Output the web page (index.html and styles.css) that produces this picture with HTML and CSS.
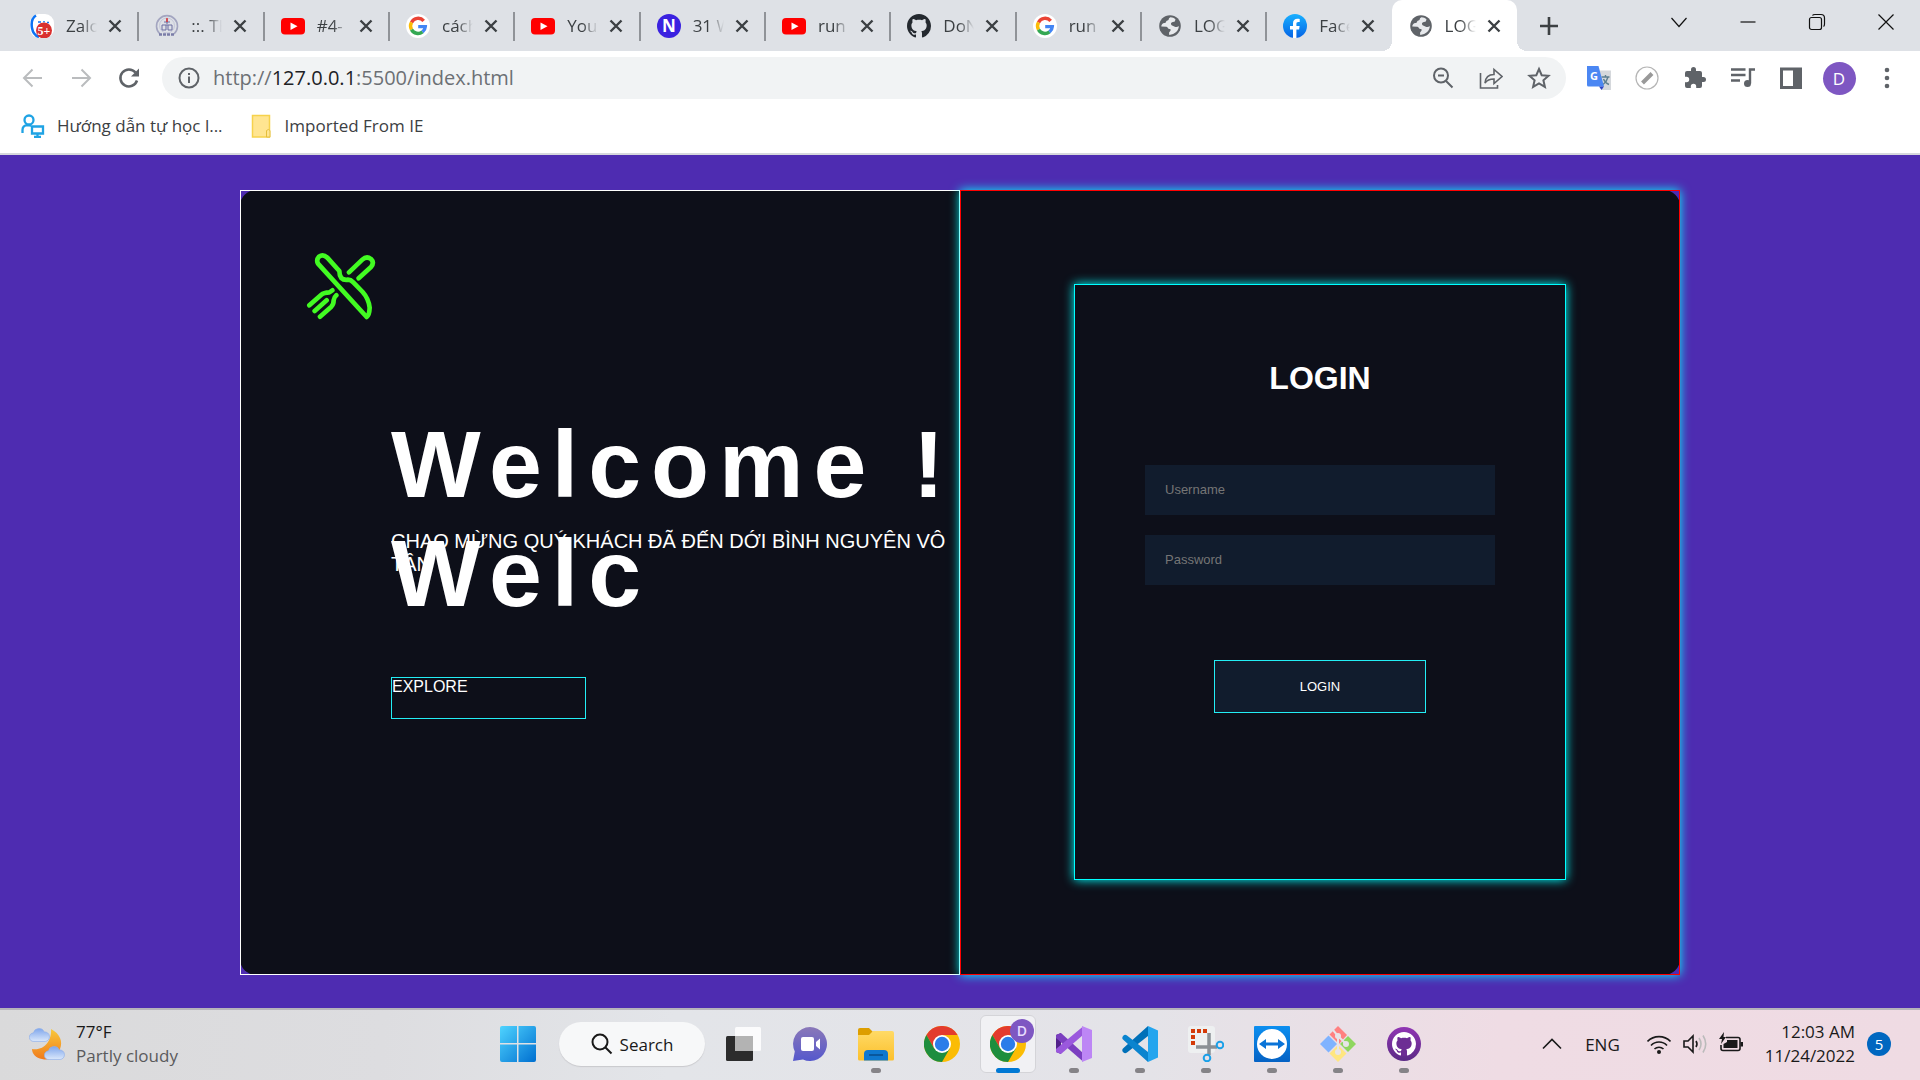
FILE: index.html
```html
<!DOCTYPE html>
<html lang="vi">
<head>
<meta charset="utf-8">
<title>LOGIN</title>
<link rel="stylesheet" href="styles.css">
</head>
<body>
<svg class="sprite" aria-hidden="true">
  <defs>
    <linearGradient id="gWin" x1="0" y1="0" x2="1" y2="1"><stop offset="0" stop-color="#4fd4ff"/><stop offset="1" stop-color="#006fd0"/></linearGradient>
    <linearGradient id="gMoon" x1="0" y1="0" x2="0" y2="1"><stop offset="0" stop-color="#f8c93c"/><stop offset="1" stop-color="#f07a1c"/></linearGradient>
    <linearGradient id="gCloud" x1="0" y1="0" x2="0" y2="1"><stop offset="0" stop-color="#7fa6ec"/><stop offset="1" stop-color="#dbe8fb"/></linearGradient>
    <linearGradient id="gChat" x1="0" y1="0" x2="0" y2="1"><stop offset="0" stop-color="#8a78b8"/><stop offset="1" stop-color="#5558cc"/></linearGradient>
    <linearGradient id="gFolder" x1="0" y1="0" x2="0" y2="1"><stop offset="0" stop-color="#ffda66"/><stop offset="1" stop-color="#fcc02c"/></linearGradient>
    <linearGradient id="gFb" x1="0" y1="0" x2="0" y2="1"><stop offset="0" stop-color="#19b0ff"/><stop offset="1" stop-color="#0563e5"/></linearGradient>
    <linearGradient id="gGh" x1="0" y1="0" x2="0" y2="1"><stop offset="0" stop-color="#9035b3"/><stop offset="1" stop-color="#5b2a86"/></linearGradient>
    <linearGradient id="gTv" x1="0" y1="0" x2="0" y2="1"><stop offset="0" stop-color="#0c8ff0"/><stop offset="1" stop-color="#0562c4"/></linearGradient>
  </defs>
  <symbol id="i-x" viewBox="0 0 24 24"><path d="M6.500 6.500l11 11m0-11l-11 11" stroke="#3c4043" stroke-width="2.400" fill="none"/></symbol>
  <symbol id="i-youtube" viewBox="0 0 24 24"><rect y="4" width="24" height="16.500" rx="4" fill="#f00"/><path d="M9.500 8.500l7 3.700-7 3.700z" fill="#fff"/></symbol>
  <symbol id="i-google" viewBox="0 0 24 24"><circle cx="12" cy="12" r="12" fill="#fff"/><g fill="none" stroke-width="3.400"><path d="M17.700 6.800A7.400 7.400 0 0 0 5.500 8.400" stroke="#ea4335"/><path d="M5.500 8.400a7.400 7.400 0 0 0 0 7.200" stroke="#fbbc05"/><path d="M5.500 15.600a7.400 7.400 0 0 0 11 2.300" stroke="#34a853"/><path d="M16.500 17.900a7.400 7.400 0 0 0 2.800-5.300H12.200" stroke="#4285f4"/></g></symbol>
  <symbol id="i-globe" viewBox="0 0 24 24"><circle cx="12" cy="12" r="10.800" fill="#5f6368"/><path d="M12.500 3.300c-2.500 1-1 2.700-3 3.200s-1 2.500-3 2.500-3.300 2-3.200 3.500l5.200.3c1.500.4 1.200 2.200 3 2.300s1.200 2 .2 2.600-.5 2-.5 3.200C17 20.500 20.800 16.500 20.800 12c-1 1-2.700 1.500-4 .7-1.200-1-3.300-.7-3.800-2.500s1.200-2.300 3.200-2.500c1-.1 1-2 1.300-2.500-1.200-1-3.400-2-5-1.900z" fill="#e8eaed"/></symbol>
  <symbol id="i-github" viewBox="0 0 16 16"><path fill-rule="evenodd" d="M8 0C3.580 0 0 3.580 0 8c0 3.540 2.290 6.530 5.470 7.590.4.070.55-.17.55-.38 0-.19-.01-.82-.01-1.490-2.010.37-2.530-.49-2.690-.94-.09-.23-.48-.94-.82-1.130-.28-.15-.68-.52-.01-.53.63-.01 1.080.58 1.230.82.72 1.210 1.870.87 2.330.66.07-.52.28-.87.51-1.070-1.780-.2-3.640-.89-3.640-3.950 0-.87.31-1.590.82-2.150-.08-.2-.36-1.020.08-2.120 0 0 .67-.21 2.200.82.64-.18 1.320-.27 2-.27s1.360.09 2 .27c1.530-1.040 2.200-.82 2.200-.82.44 1.100.16 1.920.08 2.120.51.56.82 1.270.82 2.150 0 3.070-1.870 3.750-3.650 3.950.29.25.54.73.54 1.480 0 1.070-.01 1.930-.01 2.200 0 .21.15.46.55.38A8.010 8.010 0 0 0 16 8c0-4.420-3.580-8-8-8z"/></symbol>
  <symbol id="i-chrome" viewBox="0 0 36 36"><circle cx="18" cy="18" r="18" fill="#fbbc04"/><path d="M18 9h15.600A18 18 0 0 0 2.400 9l7.800 13.500z" fill="#e33b2e"/><path d="M2.400 9a18 18 0 0 0 15.600 27l7.800-13.500-15.600 0z" fill="#1e8e3e"/><circle cx="18" cy="18" r="9" fill="#fff"/><circle cx="18" cy="18" r="7.200" fill="#2b7de9"/></symbol>
  <symbol id="i-cloud" viewBox="0 0 22 17"><path d="M5 16.500a4.600 4.600 0 0 1-.4-9.200A6 6 0 0 1 16 6.300a5 5 0 0 1 1 10.200z" fill="url(#gCloud)" stroke="#8fb0ea" stroke-width=".7"/></symbol>
</svg>

<header class="browser">
  <div class="tabstrip">
    <nav class="tabs" aria-label="Tabs">
      <div class="tab"><svg class="fav" viewBox="0 0 24 24"><rect width="24" height="24" rx="9" fill="#fff"/><path d="M6 1.500C2 4 1 8 2 14s4 8 7 9" fill="none" stroke="#0b73f5" stroke-width="2.500"/><path d="M8 8h3M14 7v1.500M17 8.500h2" stroke="#0b73f5" stroke-width="1.500"/><circle cx="14" cy="16.500" r="8" fill="#d93030"/><text x="14" y="20.500" text-anchor="middle" class="t-badge">5+</text></svg><span class="title">Zalo</span><button class="close" aria-label="Close"><svg><use href="#i-x"/></svg></button></div>
      <div class="tab"><svg class="fav" viewBox="0 0 24 24" fill="none" stroke="#a3a5c0"><path d="M5 20A10.500 10.500 0 1 1 19 20" stroke-width="1.600"/><circle cx="12" cy="11.500" r="7.500" stroke="#c4c6d8"/><path d="M12 5v7M9 8h6M7 11h4v5H7zM13 11h4v5h-4z" stroke="#6b6da0"/><path d="M12 4v4" stroke="#d33" stroke-width="1.500"/><path d="M4 20.500h16" stroke="#7a7ca8" stroke-width="2.500" stroke-dasharray="3 1"/></svg><span class="title">::. TH</span><button class="close" aria-label="Close"><svg><use href="#i-x"/></svg></button></div>
      <div class="tab"><svg class="fav"><use href="#i-youtube"/></svg><span class="title">#4-</span><button class="close" aria-label="Close"><svg><use href="#i-x"/></svg></button></div>
      <div class="tab"><svg class="fav"><use href="#i-google"/></svg><span class="title">cách</span><button class="close" aria-label="Close"><svg><use href="#i-x"/></svg></button></div>
      <div class="tab"><svg class="fav"><use href="#i-youtube"/></svg><span class="title">YouT</span><button class="close" aria-label="Close"><svg><use href="#i-x"/></svg></button></div>
      <div class="tab"><svg class="fav" viewBox="0 0 24 24"><circle cx="12" cy="12" r="12" fill="#3b22e0"/><text x="12" y="18" text-anchor="middle" class="t-n">N</text></svg><span class="title">31 W</span><button class="close" aria-label="Close"><svg><use href="#i-x"/></svg></button></div>
      <div class="tab"><svg class="fav"><use href="#i-youtube"/></svg><span class="title">run</span><button class="close" aria-label="Close"><svg><use href="#i-x"/></svg></button></div>
      <div class="tab"><svg class="fav" fill="#24292f"><use href="#i-github"/></svg><span class="title">DoN</span><button class="close" aria-label="Close"><svg><use href="#i-x"/></svg></button></div>
      <div class="tab"><svg class="fav"><use href="#i-google"/></svg><span class="title">run</span><button class="close" aria-label="Close"><svg><use href="#i-x"/></svg></button></div>
      <div class="tab"><svg class="fav"><use href="#i-globe"/></svg><span class="title">LOG</span><button class="close" aria-label="Close"><svg><use href="#i-x"/></svg></button></div>
      <div class="tab last"><svg class="fav" viewBox="0 0 24 24"><circle cx="12" cy="12" r="12" fill="url(#gFb)"/><path d="M10 24v-8.500H7V12h3V9.300C10 6.300 11.700 4.700 14.400 4.700c1.200 0 2.300.2 2.300.2v3h-1.400c-1.500 0-1.900.9-1.900 1.800V12h3.200l-.5 3.500h-2.700V24z" fill="#fff"/></svg><span class="title">Face</span><button class="close" aria-label="Close"><svg><use href="#i-x"/></svg></button></div>
      <div class="tab active"><svg class="fav"><use href="#i-globe"/></svg><span class="title">LOG</span><button class="close" aria-label="Close"><svg><use href="#i-x"/></svg></button></div>
    </nav>
    <button class="newtab" aria-label="New tab"><svg viewBox="0 0 24 24" width="24" height="24"><path d="M12 3v18M3 12h18" stroke="#3c4043" stroke-width="2.600"/></svg></button>
    <div class="winctl">
      <button aria-label="Search tabs"><svg viewBox="0 0 24 24"><path d="M4.500 8l7.500 8.500L19.500 8"/></svg></button>
      <button aria-label="Minimize"><svg viewBox="0 0 24 24"><path d="M4.500 12h15"/></svg></button>
      <button aria-label="Restore"><svg viewBox="0 0 24 24"><rect x="4.500" y="7.500" width="12" height="12" rx="2"/><path d="M7.500 5.500Q8 4.500 10 4.500h6q3.500 0 3.500 3.500v6q0 2-1 2.500"/></svg></button>
      <button aria-label="Close window"><svg viewBox="0 0 24 24"><path d="M4.500 4.500l15 15m0-15l-15 15"/></svg></button>
    </div>
  </div>

  <div class="toolbar">
    <button aria-label="Back" class="dim"><svg viewBox="0 0 24 24"><path d="M21 12H3.500M11.500 3.500L3 12l8.500 8.500"/></svg></button>
    <button aria-label="Forward" class="dim"><svg viewBox="0 0 24 24"><path d="M3 12h17.500M12.500 3.500L21 12l-8.500 8.500"/></svg></button>
    <button aria-label="Reload"><svg viewBox="0 0 24 24"><path d="M20 14.500a8.500 8.500 0 1 1-1.500-8" stroke-width="2.500"/><path d="M22 2.500v8h-8z" fill="#5f6368" stroke="none"/></svg></button>
    <div class="omnibox">
      <svg class="info" viewBox="0 0 24 24"><circle cx="12" cy="12" r="9.500"/><path d="M12 10.500v6.500M12 7v2"/></svg>
      <div class="url" role="textbox" aria-label="Address" contenteditable="true" spellcheck="false">http://<b>127.0.0.1</b>:5500/index.html</div>
      <button aria-label="Zoom"><svg viewBox="0 0 24 24"><circle cx="10" cy="9.500" r="7"/><path d="M15 15l6.500 6.500M7 9.500h6" /></svg></button>
      <button aria-label="Share"><svg viewBox="0 0 24 24"><g stroke-width="1.600"><path d="M1.500 7v15h17v-3"/><path d="M6 17c.5-6 4-8.500 9-8.500V3.500l8 7-8 7V13c-4 0-7 1-9 4z"/></g></svg></button>
      <button aria-label="Bookmark"><svg viewBox="0 0 24 24"><path d="M12 3l2.700 6.200 6.800.6-5.100 4.500 1.500 6.600-5.900-3.500-5.900 3.500 1.500-6.600-5.100-4.500 6.800-.6z"/></svg></button>
    </div>
    <div class="ext">
      <button aria-label="Translate"><svg class="solid" viewBox="0 0 24 24"><path d="M11 4.500h13V24H15z" fill="#d5d8dc"/><path d="M14.500 11h8M18.500 9v2M21 11c-1 4-3 6-5 7.500M16.500 13c1 2.500 3 4.500 5.500 5.500" stroke="#5d7f90" stroke-width="1.400" fill="none"/><path d="M0 0h11.500L17 20.500H1.500Q0 20.500 0 19z" fill="#4b87f3"/><path d="M12 20.500h5L14.500 24z" fill="#2f45c5"/><text x="7" y="14" text-anchor="middle" class="t-g">G</text></svg></button>
      <button aria-label="Editor"><svg viewBox="0 0 24 24"><circle cx="12" cy="12" r="11" stroke="#b5b5b5" stroke-width="1.200"/><path d="M7.500 17L17 7.500" stroke="#999" stroke-width="4"/></svg></button>
      <button aria-label="Extensions"><svg class="solid" viewBox="0 0 24 24"><path fill="#5f6368" d="M20.500 11H19V7a2 2 0 0 0-2-2h-4V3.500a2.500 2.500 0 0 0-5 0V5H4a2 2 0 0 0-2 2v3.800h1.500a2.700 2.700 0 0 1 0 5.400H2V20a2 2 0 0 0 2 2h3.800v-1.500a2.700 2.700 0 0 1 5.400 0V22H17a2 2 0 0 0 2-2v-4h1.500a2.500 2.500 0 0 0 0-5z"/></svg></button>
      <button aria-label="Media"><svg viewBox="0 0 24 24"><path d="M0 3.500h14.500M0 9h14.500M0 14.500h9M19 17.500V3.500h5" stroke-width="2.400"/><circle cx="16.500" cy="17.500" r="3.500" fill="#5f6368" stroke="none"/></svg></button>
      <button aria-label="Side panel"><svg class="solid" viewBox="0 0 24 24"><path fill="#5f6368" fill-rule="evenodd" d="M1 1.500h22v21.500H1zM4 4.500V20h10V4.500z"/></svg></button>
      <button aria-label="Profile"><span class="avatar">D</span></button>
      <button aria-label="Menu"><svg class="solid" viewBox="0 0 24 24"><g fill="#5f6368"><circle cx="12" cy="4" r="2.300"/><circle cx="12" cy="12" r="2.300"/><circle cx="12" cy="20" r="2.300"/></g></svg></button>
    </div>
  </div>

  <nav class="bookmarks" aria-label="Bookmarks">
    <a href="#"><svg viewBox="0 0 24 24" fill="none" stroke="#1fa3e4" stroke-width="2.300"><circle cx="8" cy="6" r="4.500"/><path d="M1.500 19v-3q0-4.500 5-4.800l3.500.5M11 12.500h11v7H11zM16.500 20v3M13 23h7"/></svg>Hướng dẫn tự học l...</a>
    <a href="#"><svg viewBox="0 0 24 24"><path d="M3.500 1.500h17V23h-17z" fill="#ffe591" stroke="#f6d24c" stroke-width="1.500"/><path d="M17.500 23v-6.500q2-2 3.500 0V23z" fill="#ffe591" stroke="#e4be3c"/></svg>Imported From IE</a>
  </nav>
</header>

<main class="page">
  <div class="card">
    <section class="welcome">
      <svg class="logo" viewBox="258 246 210 204" aria-hidden="true"><path d="M294 281L440 441Q448 436 449 413Q446 386 428 366L400 337Q392 329 384 329Q371 331 364 324Q358 316 358 303L322 263Q309 251 297 260Q288 270 294 281zM387 307L427 269Q440 257 453 267Q464 278 453 291L416 325M268 406L304 374Q311 368 328 367L337 361M284 423L320 391M300 440L334 410Q341 403 341 391Q342 382 349 376"/></svg>
      <div class="intro">
        <h1>Welcome !<br>Welc</h1>
        <p>CHAO MỪNG QUÝ KHÁCH ĐÃ ĐẾN DỚI BÌNH NGUYÊN VÔ TÂN</p>
      </div>
      <a class="explore" href="#">EXPLORE</a>
    </section>
    <section class="side">
      <form class="login">
        <h2>LOGIN</h2>
        <input type="text" placeholder="Username" aria-label="Username">
        <input type="password" placeholder="Password" aria-label="Password">
        <button type="button">LOGIN</button>
      </form>
    </section>
  </div>
</main>

<footer class="taskbar">
  <button class="weather">
    <svg viewBox="0 0 36 34" width="36" height="34"><path d="M22 2c9 5 12 12 9 20-3 8-10 12-18 10C7 31 3 27 3 22c12 2 20-8 19-20z" fill="url(#gMoon)"/><use href="#i-cloud" x="0" y="-1" width="21" height="16"/><use href="#i-cloud" x="15" y="17" width="21" height="16"/></svg>
    <span class="lines"><span>77°F</span><span class="muted">Partly cloudy</span></span>
  </button>
  <nav class="apps" aria-label="Apps">
    <button class="app" aria-label="Start"><svg viewBox="0 0 36 36"><path d="M2 0h15v17H0V2q0-2 2-2zM18.500 0H34q2 0 2 2v15H18.500zM0 18.500h17V36H2q-2 0-2-2zM18.500 18.500H36V34q0 2-2 2H18.500z" fill="url(#gWin)"/></svg></button>
    <button class="search"><svg viewBox="0 0 22 22" width="22" height="22"><circle cx="9" cy="9" r="7.500"/><path d="M14.500 14.500l6 6"/></svg>Search</button>
    <button class="app" aria-label="Task view"><svg viewBox="0 0 36 36"><rect x="0" y="10" width="27" height="25" rx="1.500" fill="#2c2c2c"/><rect x="9" y="1" width="26" height="24" rx="1.500" fill="#fff" opacity=".85"/><path d="M9 10h18v15H9z" fill="#b3b3b3"/></svg></button>
    <button class="app" aria-label="Chat"><svg viewBox="0 0 36 36"><path d="M18 1a17 17 0 1 1-7 32.500L1 35l1.800-9.500A17 17 0 0 1 18 1z" fill="url(#gChat)"/><rect x="9" y="11" width="13" height="14" rx="2" fill="#fff"/><path d="M24 16l4-3.500v11L24 20z" fill="#fff"/></svg></button>
    <button class="app run" aria-label="File Explorer"><svg viewBox="0 0 36 36"><path d="M0 4q0-2 2-2h9l4 4v6H0z" fill="#dd9e00"/><path d="M0 9h11l4-4h19q2 0 2 2v26q0 1.500-1.500 1.500h-33Q0 34.500 0 33z" fill="url(#gFolder)"/><path d="M6 34.500V28q0-4 4-4h16q4 0 4 4v6.500z" fill="#0f78cf"/><path d="M11 29h14" stroke="#084c8c" stroke-width="1.500"/></svg></button>
    <button class="app" aria-label="Chrome"><svg><use href="#i-chrome"/></svg></button>
    <button class="app run current" aria-label="Chrome, profile D"><span class="tile"><svg><use href="#i-chrome"/></svg><span class="pbadge">D</span></span></button>
    <button class="app run" aria-label="Visual Studio"><svg viewBox="0 0 36 36"><path d="M0 9l5-2v21l-5-2z" fill="#52218a"/><path d="M5 7L27 27v8.500L0 12V9z" fill="#7b3fc0"/><path d="M5 28L27 9V.5L0 23v3z" fill="#9a58dd"/><path d="M26 0l10 4v28l-10 4z" fill="#bd86f5"/></svg></button>
    <button class="app run" aria-label="Visual Studio Code"><svg viewBox="0 0 36 36"><path d="M1.500 26.500Q-1 24 1.500 22L26 0v10L5 26.500q-2 1.500-3.500 0z" fill="#0070b8"/><path d="M1.500 9.500Q-1 12 1.500 14L26 36V26L5 9.500q-2-1.500-3.500 0z" fill="#0a84cf"/><path d="M26 0l10 4.500v27L26 36z" fill="#24a5ee"/></svg></button>
    <button class="app run" aria-label="Snipping Tool"><svg viewBox="0 0 36 36"><rect width="27" height="27" rx="3" fill="#eef0f1"/><path d="M3 5h16M5 9v10" stroke="#d43a08" stroke-width="4" stroke-dasharray="4 2" fill="none"/><path d="M21 7v22M8 21h21" stroke="#8b9095" stroke-width="3.500"/><g fill="none" stroke="#1ba0e8" stroke-width="2"><circle cx="32" cy="19" r="3.300"/><circle cx="19" cy="32" r="3.300"/></g></svg></button>
    <button class="app run" aria-label="TeamViewer"><svg viewBox="0 0 36 36"><rect width="36" height="36" rx="1" fill="url(#gTv)"/><circle cx="18" cy="18" r="15" fill="#fff"/><path d="M5 18l7-5v3.500h12V13l7 5-7 5v-3.500H12V23z" fill="#0a74d8"/></svg></button>
    <button class="app run" aria-label="Git"><svg viewBox="0 0 36 36"><path d="M18 0l9 9-8 9L9.500 8.500z" fill="#ff8080"/><path d="M8.500 9.500L17 18l-8.500 8.500L0 18z" fill="#80b3ff"/><path d="M28 10l8 8-8 8-8-8z" fill="#8fd65f"/><path d="M18 19l8.500 8.500L18 36l-8.500-8.500z" fill="#ffe680"/><path d="M13 4l5 6v15M18 10l8 8" stroke="#e8e4e8" stroke-width="2" fill="none"/><g fill="#e8e4e8"><circle cx="18" cy="10" r="3"/><circle cx="26" cy="18" r="3"/><circle cx="18" cy="26" r="3"/></g></svg></button>
    <button class="app run" aria-label="GitHub Desktop"><svg viewBox="0 0 36 36"><circle cx="18" cy="18" r="17" fill="url(#gGh)"/><circle cx="18" cy="18" r="12" fill="#6d2d94"/><use href="#i-github" x="6" y="6" width="24" height="24" fill="#fff"/></svg></button>
  </nav>
  <div class="tray">
    <button class="chev" aria-label="Hidden icons"><svg viewBox="0 0 24 24"><path d="M3 16.500l9-9 9 9"/></svg></button>
    <span class="lang">ENG</span>
    <button class="status" aria-label="Network, sound, battery">
      <svg viewBox="0 0 24 24"><path d="M.5 9.500a16 16 0 0 1 23 0M4 13.500a11 11 0 0 1 16 0M7.500 17a6.500 6.500 0 0 1 9 0"/><circle cx="12" cy="20" r="2" fill="#191919" stroke="none"/></svg>
      <svg viewBox="0 0 24 24"><path d="M1 9h4l5-5v16l-5-5H1zM13 9q2 3 0 6"/><path d="M16 6q4 6 0 12M20 3.500q5.500 8.500 0 17" stroke="#bbb"/></svg>
      <svg viewBox="0 0 24 24"><path d="M7 5.500h12q2 0 2 2v9q0 2-2 2H4q-2 0-2-2V13"/><path d="M8 8h10.500v8H4.500v-4L8 10zM21.500 10H24v4.500h-2.500zM5 0L0 7h3l-1 5 5-7H4.500z" fill="#191919" stroke="none"/></svg>
    </button>
    <button class="clock"><span class="lines"><span>12:03 AM</span><span>11/24/2022</span></span><span class="count">5</span></button>
  </div>
</footer>
</body>
</html>
```
FILE: styles.css
```css
* { box-sizing: border-box; }

body {
  margin: 0;
  min-height: 100vh;
  display: flex;
  flex-direction: column;
  font-family: "Open Sans", "Noto Sans", sans-serif;
  font-size: 17px;
  color: #3c4043;
}

button {
  border: 0;
  padding: 0;
  background: none;
  font: inherit;
  color: inherit;
}

.sprite { position: absolute; width: 0; height: 0; }

/* Browser chrome */
.browser { background: #fff; border-bottom: 2px solid #d6d7dc; }

.tabstrip {
  display: flex;
  height: 51px;
  padding-left: 13px;
  background: #dee1e6;
}

.tabs { display: flex; flex: 1; }

.tab {
  position: relative;
  flex: 1 1 0;
  min-width: 0;
  display: flex;
  align-items: center;
  padding-left: 17px;
}

.tab::after {
  content: "";
  position: absolute;
  right: -1px;
  top: 12px;
  width: 2px;
  height: 29px;
  background: #909398;
}

.tab.last::after { display: none; }

.tab.active { background: #fff; border-radius: 10px 10px 0 0; }

.tab.active::before,
.tab.active::after {
  content: "";
  position: absolute;
  display: block;
  top: auto;
  bottom: 0;
  width: 10px;
  height: 10px;
}

.tab.active::before { left: -10px; background: radial-gradient(circle at 0 0, transparent 10px, #fff 10px); }
.tab.active::after { right: -10px; background: radial-gradient(circle at 100% 0, transparent 10px, #fff 10px); }

.fav { flex: none; width: 24px; height: 24px; }

.title {
  flex: none;
  width: 31px;
  margin-left: 12px;
  overflow: hidden;
  white-space: nowrap;
  -webkit-mask-image: linear-gradient(90deg, #000 50%, transparent);
  mask-image: linear-gradient(90deg, #000 50%, transparent);
}

.close { margin-left: 6px; width: 24px; height: 24px; }
.close svg { display: block; width: 24px; height: 24px; }

.newtab { width: 64px; display: grid; place-items: center; }

.winctl { display: flex; height: 44px; margin-left: 63px; }
.winctl button { width: 69px; display: grid; place-items: center; }
.winctl svg { width: 24px; height: 24px; fill: none; stroke: #111; stroke-width: 1.2; }

.toolbar {
  display: flex;
  align-items: center;
  padding: 6px 9px 5px;
}

.toolbar button { width: 48px; height: 42px; display: grid; place-items: center; }
.toolbar svg { width: 24px; height: 24px; fill: none; stroke: #5f6368; stroke-width: 2; }
.toolbar .dim svg { stroke: #babcbe; }
.toolbar svg.solid { stroke: none; }

.omnibox {
  flex: 1;
  display: flex;
  align-items: center;
  height: 42px;
  margin-left: 9px;
  padding: 0 3px 0 15px;
  border-radius: 21px;
  background: #f1f3f4;
}

.url { flex: 1; margin-left: 12px; font-size: 20px; line-height: 28px; color: #6c7074; }
.url b { font-weight: 400; color: #202124; }

.ext { display: flex; margin-left: 9px; }

.avatar {
  width: 33px;
  height: 33px;
  border-radius: 50%;
  background: #7e57c2;
  color: #fff;
  line-height: 33px;
}

.t-badge { font: bold 12px "Liberation Serif", serif; fill: #fff; }
.t-n { font: bold 17px "Open Sans", sans-serif; fill: #fff; }
.t-g { font: bold 11px "Open Sans", sans-serif; fill: #fff; }

.bookmarks { display: flex; gap: 26px; height: 49px; padding: 0 21px 6px; }
.bookmarks a { display: flex; align-items: center; gap: 12px; color: inherit; text-decoration: none; }
.bookmarks svg { width: 24px; height: 24px; }

/* Login page */
.page {
  flex: 1;
  display: flex;
  padding: 35px 12.5% 33px;
  background: #4e2cb1;
  font-family: "Liberation Sans", Arial, sans-serif;
  color: #fff;
}

.card {
  flex: 1;
  display: grid;
  grid-template-columns: minmax(0, 1fr) minmax(0, 1fr);
  border-radius: 16px;
  background: #0d0f19;
}

.welcome { padding: 61px 0 0 65px; border: 1px solid #fff; }

.logo {
  display: block;
  width: 70px;
  height: 68px;
  fill: none;
  stroke: #42fb22;
  stroke-width: 14;
  stroke-linecap: round;
  stroke-linejoin: round;
}

.intro { display: grid; margin: 90px 0 0 85px; }
.intro h1, .intro p { grid-area: 1 / 1; margin: 0; }
.intro h1 { font-size: 95px; line-height: 109px; letter-spacing: 10px; white-space: nowrap; }
.intro p { padding-top: 120px; font-size: 20px; line-height: 23px; }

.explore {
  display: block;
  width: 195px;
  height: 42px;
  margin: 49px 0 0 85px;
  border: 1px solid #23eef5;
  color: #fff;
  font-size: 16px;
  line-height: 18px;
  text-decoration: none;
}

.side {
  display: grid;
  place-items: center;
  padding-bottom: 2px;
  border: 1px solid #f00;
  box-shadow: 0 0 10px cyan;
}

.login {
  width: 492px;
  min-height: 596px;
  padding: 75px 70px 0;
  display: flex;
  flex-direction: column;
  gap: 20px;
  border: 1px solid cyan;
  box-shadow: 0 0 10px cyan;
  background: #0d0f19;
}

.login h2 { margin: 0 0 48px; font-size: 32px; line-height: 37px; text-align: center; }

.login input {
  height: 50px;
  padding: 0 20px;
  border: 0;
  background: #111c2d;
  color: #fff;
  font: 13px "Liberation Sans", Arial, sans-serif;
}

.login input::placeholder { color: #757575; }

.login button {
  align-self: center;
  width: 212px;
  height: 53px;
  margin-top: 55px;
  border: 1px solid #23eef5;
  background: #111c2d;
  color: #fff;
  font-size: 13px;
  font-weight: 500;
}

/* Taskbar */
.taskbar {
  display: grid;
  grid-template-columns: 1fr auto 1fr;
  align-items: stretch;
  height: 72px;
  padding-bottom: 2px;
  border-top: 2px solid #b6b4ba;
  background: linear-gradient(95deg, #dadadb 0%, #dddde0 20%, #e3e5e9 35%, #e4e3e8 60%, #efdce4 78%, #efdbe3 100%);
  color: #191919;
}

.weather { display: flex; align-items: center; gap: 11px; padding-left: 29px; text-align: left; }
.lines { display: flex; flex-direction: column; line-height: 24px; }
.muted { color: #5a5a5c; }

.apps { display: flex; padding-left: 2px; }

.app { position: relative; width: 66px; display: grid; place-items: center; }
.app svg { display: block; width: 36px; height: 36px; }

.app.run::after {
  content: "";
  position: absolute;
  left: 28px;
  bottom: 5px;
  width: 10px;
  height: 5px;
  border-radius: 3px;
  background: #858387;
}

.app.current::after { left: 21px; width: 24px; background: #0078d4; }

.tile {
  position: relative;
  display: grid;
  place-items: center;
  width: 56px;
  height: 58px;
  border: 1px solid #d4d4d8;
  border-radius: 6px;
  background: #f1f1f4;
}

.pbadge {
  position: absolute;
  right: 1px;
  top: 3px;
  width: 24px;
  height: 24px;
  border-radius: 50%;
  background: #7e57c2;
  color: #e8dcff;
  font-size: 14px;
  font-weight: 600;
  line-height: 24px;
}

.search {
  display: flex;
  align-items: center;
  align-self: center;
  justify-content: center;
  gap: 7px;
  width: 146px;
  height: 44px;
  margin: 0 6px 0 8px;
  border-radius: 22px;
  background: #f7f8f9;
  box-shadow: 0 1px 1px #c9c9cd;
}

.search svg, .tray svg { fill: none; stroke: #191919; stroke-width: 2; }

.tray { display: flex; align-items: center; justify-content: flex-end; padding-right: 29px; }
.tray svg { width: 24px; height: 24px; stroke-width: 1.6; }
.chev { display: grid; margin-right: 21px; }
.status { display: flex; gap: 12px; margin: 0 22px 0 27px; }
.clock { display: flex; align-items: center; gap: 12px; text-align: right; }

.count {
  width: 24px;
  height: 24px;
  border-radius: 50%;
  background: #0067c0;
  color: #fff;
  font-size: 15px;
  line-height: 24px;
  text-align: center;
}
```
